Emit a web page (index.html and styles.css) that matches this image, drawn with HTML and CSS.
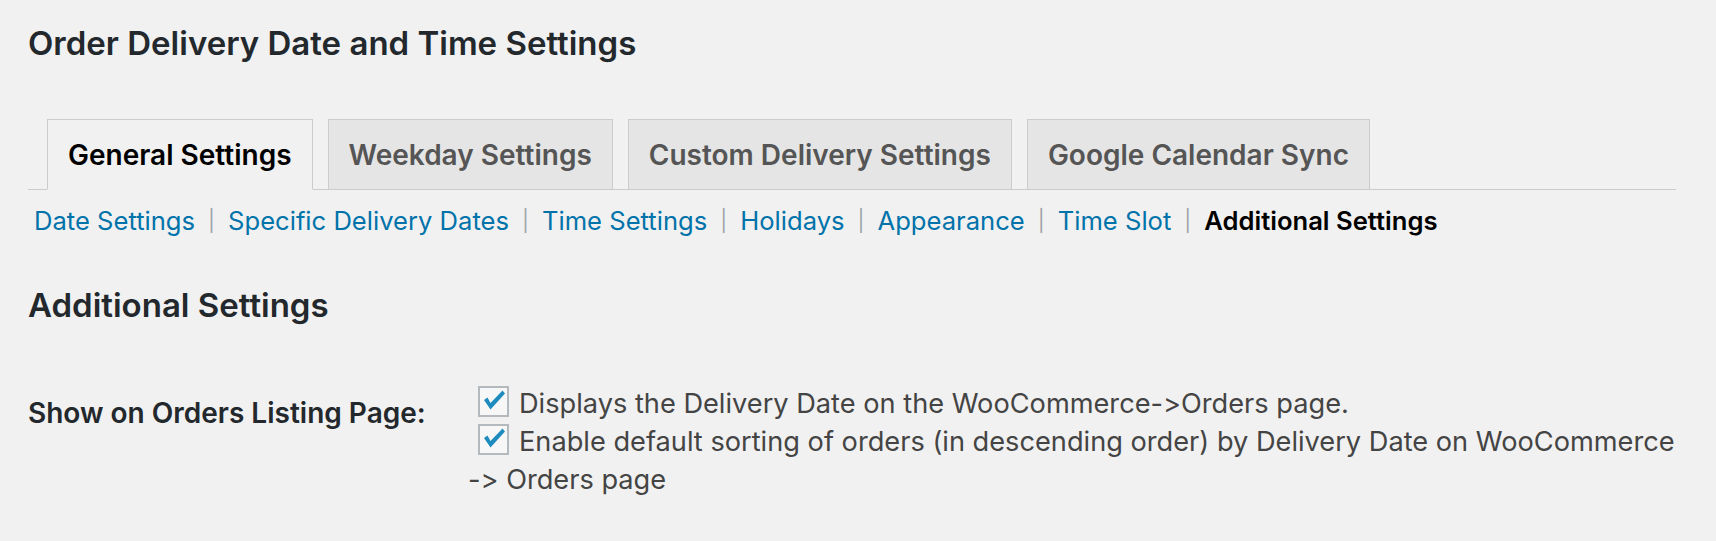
FILE: index.html
```html
<!DOCTYPE html>
<html lang="en">
<head>
    <meta charset="UTF-8">
    <meta name="viewport" content="width=device-width, initial-scale=1.0">
    <title>Order Delivery Date and Time Settings</title>
    <link rel="stylesheet" href="styles.css">
</head>
<body>
    <div class="wrap">
        <h1 class="page-title">Order Delivery Date and Time Settings</h1>

        <nav class="nav-tabs">
            <a class="nav-tab active" href="#">General Settings</a>
            <a class="nav-tab" href="#">Weekday Settings</a>
            <a class="nav-tab" href="#">Custom Delivery Settings</a>
            <a class="nav-tab" href="#">Google Calendar Sync</a>
        </nav>

        <ul class="subnav">
            <li><a href="#">Date Settings</a></li>
            <li class="sep">|</li>
            <li><a href="#">Specific Delivery Dates</a></li>
            <li class="sep">|</li>
            <li><a href="#">Time Settings</a></li>
            <li class="sep">|</li>
            <li><a href="#">Holidays</a></li>
            <li class="sep">|</li>
            <li><a href="#">Appearance</a></li>
            <li class="sep">|</li>
            <li><a href="#">Time Slot</a></li>
            <li class="sep">|</li>
            <li><a class="current" href="#">Additional Settings</a></li>
        </ul>

        <h2 class="section-title">Additional Settings</h2>

        <div class="form-row">
            <div class="form-label">Show on Orders Listing Page:</div>
            <div class="form-field">
                <label class="check-line">
                    <span class="checkbox"><svg viewBox="0 0 31 31" width="31" height="31"><path d="M6 14 L9.5 11.5 L12.5 17 L24.5 4.5 L27 7.5 L12.5 23.5 Z"/></svg></span>Displays the Delivery Date on the WooCommerce-&gt;Orders page.
                </label>
                <label class="check-line">
                    <span class="checkbox"><svg viewBox="0 0 31 31" width="31" height="31"><path d="M6 14 L9.5 11.5 L12.5 17 L24.5 4.5 L27 7.5 L12.5 23.5 Z"/></svg></span><span class="nowrap">Enable default sorting of orders (in descending order) by Delivery Date on WooCommerce</span><br>-&gt; Orders page
                </label>
            </div>
        </div>
    </div>
</body>
</html>
```

FILE: styles.css
```css
body {
    margin: 0;
    background-color: #f1f1f1;
    font-family: Inter, "Noto Sans", sans-serif;
    font-feature-settings: "calt" 0;
    color: #444;
}
.wrap {
    padding: 0 40px 0 28px;
}
.page-title {
    margin: 0;
    padding-top: 23px;
    font-size: 33px;
    line-height: 40px;
    font-weight: 600;
    color: #23282d;
}
.nav-tabs {
    display: flex;
    gap: 15px;
    height: 70px;
    margin-top: 56px;
    padding-left: 19px;
    border-bottom: 1px solid #ccc;
}
.nav-tab {
    display: flex;
    align-items: center;
    box-sizing: border-box;
    height: 71px;
    margin-bottom: -1px;
    padding: 0 20px;
    border: 1px solid #ccc;
    background-color: #e5e5e5;
    color: #555;
    font-size: 28px;
    font-weight: 600;
    text-decoration: none;
}
.nav-tab.active {
    background-color: #f1f1f1;
    border-bottom-color: #f1f1f1;
    color: #000;
}
.subnav {
    display: flex;
    align-items: center;
    gap: 13px;
    margin: 12px 0 0;
    padding: 0 0 0 6px;
    list-style: none;
    font-size: 25.6px;
    line-height: 38px;
}
.subnav a {
    color: #0073aa;
    text-decoration: none;
}
.subnav a.current {
    color: #000;
    font-weight: 600;
}
.subnav .sep {
    color: #a0a5aa;
    font-size: 21px;
}
.section-title {
    margin: 45px 0 0;
    font-size: 33px;
    line-height: 40px;
    font-weight: 600;
    color: #23282d;
}
.form-row {
    display: grid;
    grid-template-columns: 440px 1fr;
    margin-top: 60px;
}
.form-label {
    padding-top: 9px;
    font-size: 28px;
    line-height: 38px;
    font-weight: 600;
    color: #23282d;
}
.form-field {
    font-size: 27.2px;
    line-height: 38px;
    color: #444;
}
.check-line {
    display: block;
}
.checkbox {
    display: inline-block;
    box-sizing: border-box;
    width: 31px;
    height: 31px;
    margin: 0 10px 0 10px;
    vertical-align: middle;
    position: relative;
    top: -4px;
    border: 2px solid #b4b9be;
    background-color: #f7f7f7;
}
.checkbox svg {
    display: block;
    margin: -2px;
    fill: #1e8cbe;
}
.nowrap {
    white-space: nowrap;
}
```
